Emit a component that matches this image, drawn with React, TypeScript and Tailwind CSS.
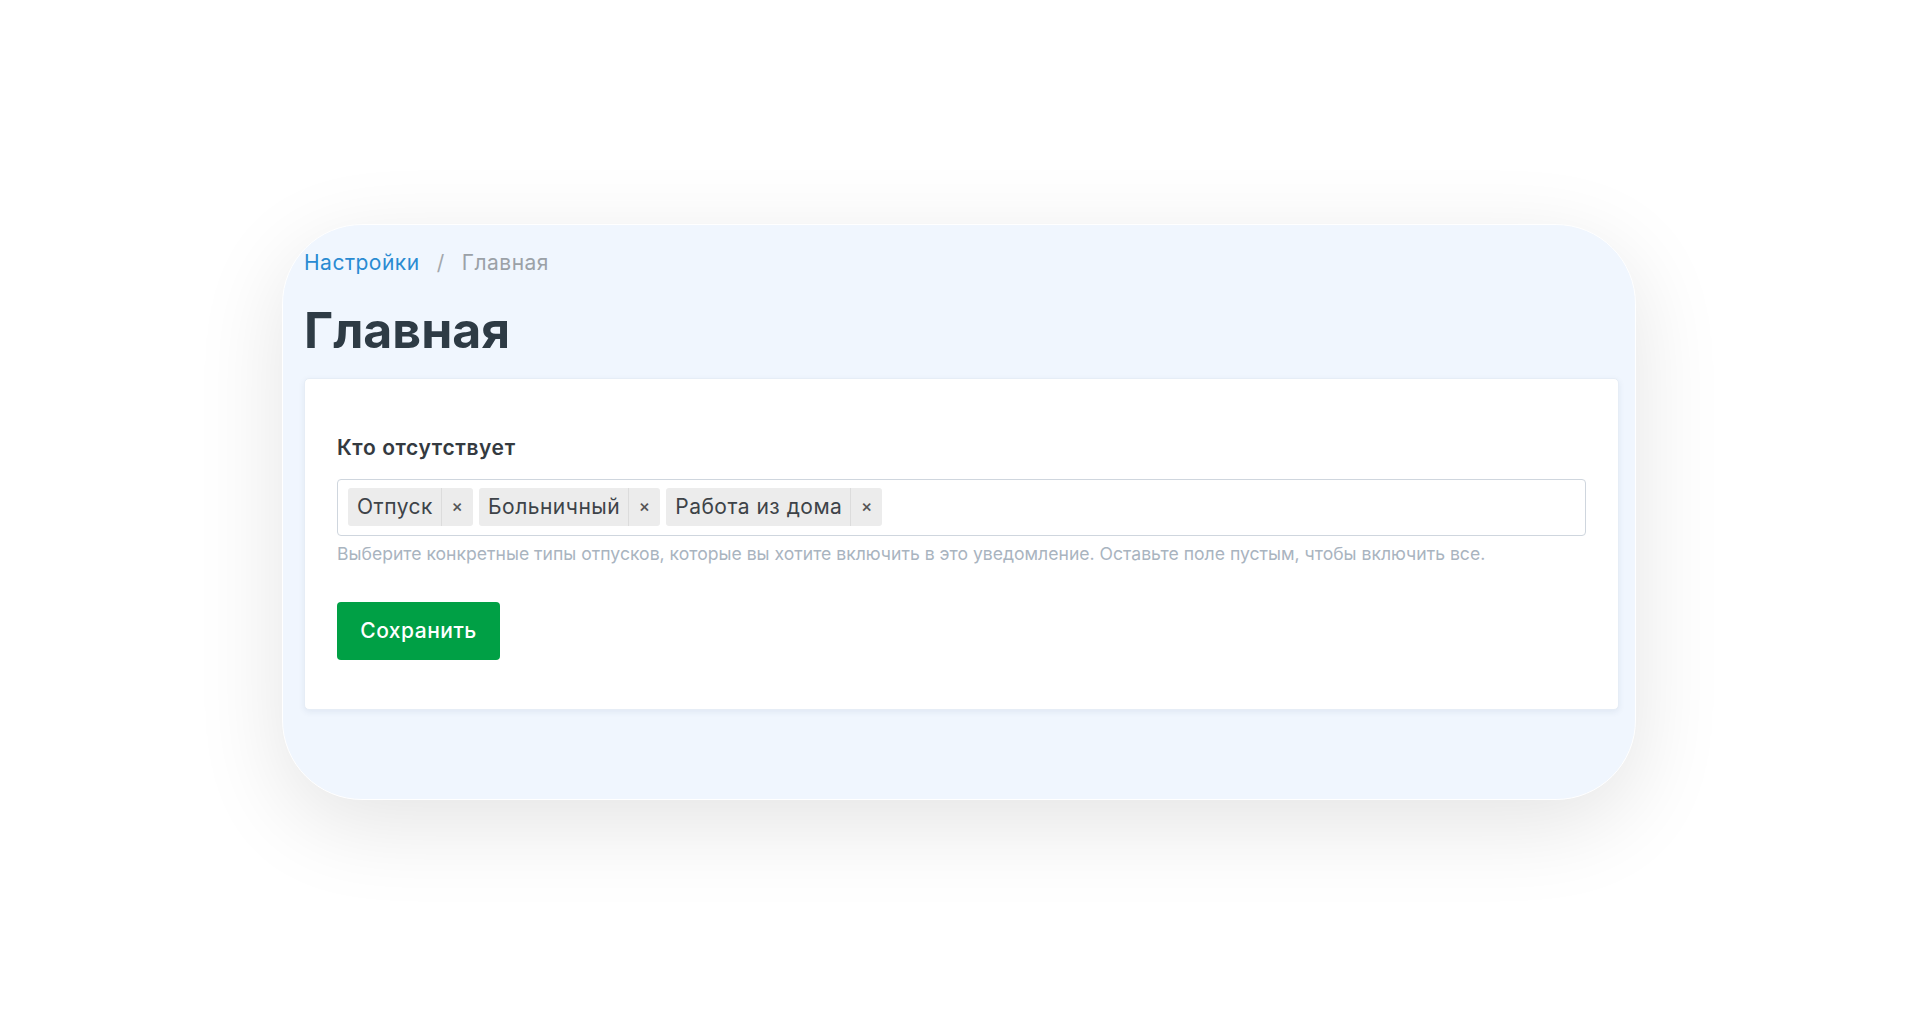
import { useState } from 'react'

const initialTags = ['Отпуск', 'Больничный', 'Работа из дома']

function Tag({ label, onRemove }: { label: string; onRemove: () => void }) {
  return (
    <div className="flex h-[38px] items-stretch rounded-[3px] bg-[#ececec] text-[21px] tracking-[0.5px] text-[#3d4348]">
      <span className="flex items-center pl-[9px] pr-[8px]">{label}</span>
      <button
        onClick={onRemove}
        className="flex w-[32px] items-center justify-center border-l border-[#dcdcdc] text-[17px] font-medium text-[#555]"
      >
        ×
      </button>
    </div>
  )
}

export default function App() {
  const [tags, setTags] = useState(initialTags)

  return (
    <div
      className="flex min-h-screen items-center justify-center bg-white pt-[14px] pr-[2px]"
      style={{ fontFamily: 'Inter, "Noto Sans", sans-serif' }}
    >
      <div className="flex h-[576px] w-[1354px] flex-col rounded-[80px] border border-white bg-[#f0f6fe] pt-[24px] pl-[21px] pr-[16px] shadow-[0_24px_90px_rgba(0,0,0,0.11)]">
        {/* Breadcrumb */}
        <nav className="flex items-center text-[21px] leading-[28px] tracking-[0.5px]">
          <a className="text-[#2a8bd2]">Настройки</a>
          <span className="mx-[17px] text-[#a3a8ad]">/</span>
          <span className="text-[#9ba1a7]">Главная</span>
        </nav>

        <h1 className="mt-[23px] text-[50px] font-bold leading-[60px] text-[#2e3b45]">Главная</h1>

        {/* Card */}
        <div className="mt-[18px] rounded-[5px] border border-[#e6edf6] bg-white px-[32px] pt-[55px] pb-[49px] shadow-[0_2px_6px_rgba(40,70,110,0.08)]">
          <label className="block text-[21px] font-semibold leading-[28px] tracking-[0.6px] text-[#343a40]">
            Кто отсутствует
          </label>

          <div className="mt-[17px] flex h-[57px] items-center gap-[6px] rounded-[4px] border border-[#cfd6de] px-[10px]">
            {tags.map((t) => (
              <Tag key={t} label={t} onRemove={() => setTags(tags.filter((x) => x !== t))} />
            ))}
          </div>

          <p className="mt-[6px] text-[17.6px] leading-[24px] text-[#a9b4bf]">
            Выберите конкретные типы отпусков, которые вы хотите включить в это уведомление. Оставьте поле пустым, чтобы включить все.
          </p>

          <button className="mt-[36px] h-[58px] w-[163px] rounded-[4px] bg-[#00a045] text-[21px] font-medium tracking-[0.5px] text-white">
            Сохранить
          </button>
        </div>
      </div>
    </div>
  )
}
